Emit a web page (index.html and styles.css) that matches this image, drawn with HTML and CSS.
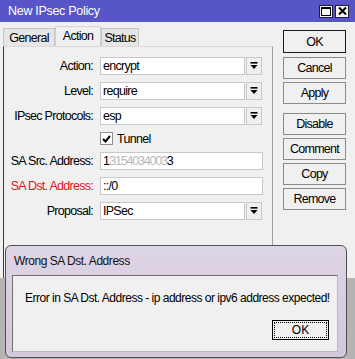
FILE: index.html
```html
<!DOCTYPE html>
<html>
<head>
<meta charset="utf-8">
<link rel="stylesheet" href="styles.css">
</head>
<body>
<div class="win">
  <div class="titlebar">
    <span class="title">New IPsec Policy</span>
    <div class="tb-btns">
      <span class="tbb"><svg width="10" height="9" viewBox="0 0 10 9"><rect x="0.5" y="0.5" width="9" height="8" fill="none" stroke="#000" stroke-width="1"/><rect x="0" y="0" width="10" height="2" fill="#000"/></svg></span>
      <span class="tbb"><svg width="9" height="8" viewBox="0 0 9 8"><path d="M1 0.5 L8 7.5 M8 0.5 L1 7.5" stroke="#000" stroke-width="2"/></svg></span>
    </div>
  </div>
  <div class="main">
    <div class="left">
      <div class="tabs">
        <div class="tab t-general">General</div>
        <div class="tab t-action active">Action</div>
        <div class="tab t-status">Status</div>
      </div>
      <div class="panel">
        <div class="row">
          <div class="lbl">Action:</div>
          <div class="field">encrypt</div>
          <div class="dd"><svg width="8" height="8" viewBox="0 0 8 8"><rect x="0.5" y="0" width="7" height="1.6" fill="#000"/><polygon points="0.5,3 7.5,3 4,7" fill="#000"/></svg></div>
        </div>
        <div class="row">
          <div class="lbl">Level:</div>
          <div class="field">require</div>
          <div class="dd"><svg width="8" height="8" viewBox="0 0 8 8"><rect x="0.5" y="0" width="7" height="1.6" fill="#000"/><polygon points="0.5,3 7.5,3 4,7" fill="#000"/></svg></div>
        </div>
        <div class="row">
          <div class="lbl">IPsec Protocols:</div>
          <div class="field">esp</div>
          <div class="dd"><svg width="8" height="8" viewBox="0 0 8 8"><rect x="0.5" y="0" width="7" height="1.6" fill="#000"/><polygon points="0.5,3 7.5,3 4,7" fill="#000"/></svg></div>
        </div>
        <div class="row check">
          <div class="lbl"></div>
          <span class="cb"><svg width="9" height="8" viewBox="0 0 9 8"><path d="M1 4 L3.5 6.5 L8 1" fill="none" stroke="#000" stroke-width="2"/></svg></span>
          <span class="cbl">Tunnel</span>
        </div>
        <div class="row">
          <div class="lbl">SA Src. Address:</div>
          <div class="field wide">1<span class="blur">3154034003</span>3</div>
        </div>
        <div class="row">
          <div class="lbl red">SA Dst. Address:</div>
          <div class="field wide">::/0</div>
        </div>
        <div class="row">
          <div class="lbl">Proposal:</div>
          <div class="field">IPSec</div>
          <div class="dd"><svg width="8" height="8" viewBox="0 0 8 8"><rect x="0.5" y="0" width="7" height="1.6" fill="#000"/><polygon points="0.5,3 7.5,3 4,7" fill="#000"/></svg></div>
        </div>
      </div>
    </div>
    <div class="btns">
      <div class="btn ok">OK</div>
      <div class="btn b-cancel">Cancel</div>
      <div class="btn b-apply">Apply</div>
      <div class="btn b-disable">Disable</div>
      <div class="btn">Comment</div>
      <div class="btn">Copy</div>
      <div class="btn">Remove</div>
    </div>
  </div>
</div>
<div class="dialog">
  <div class="d-title">Wrong SA Dst. Address</div>
  <div class="d-client">
    <div class="d-msg">Error in SA Dst. Address - ip address or ipv6 address expected!</div>
    <div class="d-actions"><div class="d-ok"><span>OK</span></div></div>
  </div>
</div>
</body>
</html>
```
FILE: styles.css
```css
body {
  margin: 0;
  width: 355px;
  height: 359px;
  overflow: hidden;
  position: relative;
  background: #b4b4b4;
  font-family: "Liberation Sans", Arial, sans-serif;
  font-size: 12px;
  color: #000;
}
.win {
  height: 278px;
  background: #f0f0f0;
  display: flex;
  flex-direction: column;
}
.titlebar {
  height: 22px;
  flex: none;
  background: #5855c8;
  color: #fff;
  display: flex;
  align-items: center;
  justify-content: space-between;
  padding: 0 6px 0 8px;
}
.title {
  font-size: 12.5px;
  letter-spacing: -0.3px;
}
.tb-btns {
  display: flex;
  gap: 2px;
}
.tbb {
  width: 14px;
  height: 13px;
  box-sizing: border-box;
  background: #f4f4f4;
  border: 1px solid #222;
  display: flex;
  align-items: center;
  justify-content: center;
}
.main {
  flex: 1;
  display: flex;
}
.left {
  width: 270px;
  padding: 4px 0 0 3px;
  display: flex;
  flex-direction: column;
}
.tab,
.lbl,
.field,
.cbl,
.btn {
  font-size: 12.5px;
  letter-spacing: -0.72px;
}
.tabs {
  height: 20px;
  display: flex;
  align-items: flex-end;
}
.tab {
  height: 18px;
  box-sizing: border-box;
  border: 1px solid #c4c4c4;
  border-bottom: none;
  background: #e6e6e6;
  display: flex;
  align-items: center;
  justify-content: center;
}
.t-general { width: 52px; }
.t-action { width: 46px; height: 20px; background: #f0f0f0; border-color: #d4d4d4; padding-bottom: 2px; }
.t-status { width: 38px; }
.panel {
  flex: 1;
  border-top: 1px solid #dadada;
  border-left: 1px solid #3a3a3a;
  border-right: 1px solid #a0a0a0;
  padding-top: 10px;
  display: flex;
  flex-direction: column;
  gap: 7px;
}
.row {
  height: 18px;
  display: flex;
  align-items: center;
}
.row.check {
  height: 13px;
}
.lbl {
  width: 89px;
  margin-right: 7px;
  text-align: right;
  white-space: nowrap;
}
.lbl.red {
  color: #d42020;
}
.field {
  width: 145px;
  height: 18px;
  box-sizing: border-box;
  border: 1px solid #c8c8c8;
  background: #fff;
  padding-left: 2px;
  line-height: 16px;
  white-space: nowrap;
  overflow: hidden;
}
.field.wide {
  width: 163px;
}
.blur {
  color: #b8b8b8;
  letter-spacing: -1.2px;
}
.dd {
  width: 16px;
  height: 18px;
  box-sizing: border-box;
  margin-left: 1px;
  border: 1px solid #c8c8c8;
  background: #f0f0f0;
  display: flex;
  align-items: center;
  justify-content: center;
}
.cb {
  width: 13px;
  height: 13px;
  box-sizing: border-box;
  border: 1px solid #8e8e8e;
  background: #fff;
  display: flex;
  align-items: center;
  justify-content: center;
}
.cbl {
  margin-left: 4px;
}
.btns {
  margin-left: 10px;
  padding-top: 8px;
  display: flex;
  flex-direction: column;
}
.btn {
  width: 63px;
  height: 22px;
  box-sizing: border-box;
  border: 1px solid #8a8a8a;
  background: #f0f0f0;
  display: flex;
  align-items: center;
  justify-content: center;
  margin-top: 3px;
}
.btn.ok {
  margin-top: 0;
  height: 23px;
  border: 1px solid #1a1a1a;
}
.btn.b-cancel { margin-top: 4px; }
.btn.b-disable { margin-top: 9px; }

.dialog {
  position: absolute;
  left: 5px;
  top: 245px;
  width: 342px;
  height: 113px;
  box-sizing: border-box;
  border: 1px solid #505050;
  border-radius: 6px;
  background: linear-gradient(#ddd4e4, #d3c8db);
  padding: 0 8px 5px 6px;
  display: flex;
  flex-direction: column;
}
.d-title {
  height: 29px;
  display: flex;
  align-items: center;
  padding-left: 2px;
  font-size: 12px;
  letter-spacing: -0.45px;
  color: #111;
}
.d-client {
  flex: 1;
  background: #f0f0f0;
  border: 1px solid #6e6e6e;
  border-right-color: #b8b8b8;
  border-bottom-color: #b8b8b8;
  display: flex;
  flex-direction: column;
  padding: 15px 0 0 12px;
}
.d-msg {
  font-size: 12px;
  letter-spacing: -0.5px;
  line-height: 14px;
  white-space: nowrap;
}
.d-actions {
  flex: 1;
  display: flex;
  justify-content: flex-end;
  align-items: flex-end;
  padding: 0 8px 11px 0;
}
.d-ok {
  width: 57px;
  height: 20px;
  box-sizing: border-box;
  border: 1px solid #000;
  background: #f0f0f0;
  padding: 1px;
}
.d-ok span {
  display: flex;
  height: 100%;
  box-sizing: border-box;
  border: 1px dotted #000;
  align-items: center;
  justify-content: center;
  font-size: 12px;
}
```
